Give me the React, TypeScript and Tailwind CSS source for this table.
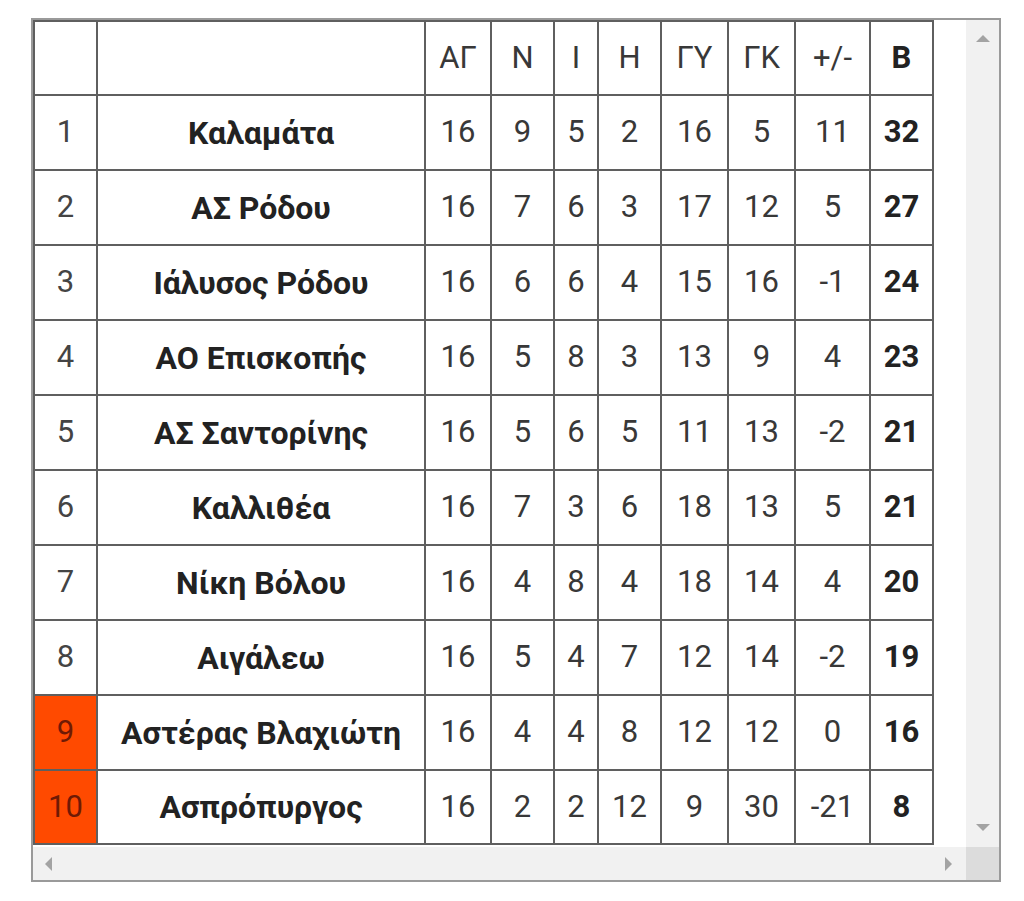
import React from 'react'

type Row = {
  pos: number
  team: string
  stats: number[]
  pts: number
  relegated?: boolean
}

const rows: Row[] = [
  { pos: 1, team: 'Καλαμάτα', stats: [16, 9, 5, 2, 16, 5, 11], pts: 32 },
  { pos: 2, team: 'ΑΣ Ρόδου', stats: [16, 7, 6, 3, 17, 12, 5], pts: 27 },
  { pos: 3, team: 'Ιάλυσος Ρόδου', stats: [16, 6, 6, 4, 15, 16, -1], pts: 24 },
  { pos: 4, team: 'ΑΟ Επισκοπής', stats: [16, 5, 8, 3, 13, 9, 4], pts: 23 },
  { pos: 5, team: 'ΑΣ Σαντορίνης', stats: [16, 5, 6, 5, 11, 13, -2], pts: 21 },
  { pos: 6, team: 'Καλλιθέα', stats: [16, 7, 3, 6, 18, 13, 5], pts: 21 },
  { pos: 7, team: 'Νίκη Βόλου', stats: [16, 4, 8, 4, 18, 14, 4], pts: 20 },
  { pos: 8, team: 'Αιγάλεω', stats: [16, 5, 4, 7, 12, 14, -2], pts: 19 },
  { pos: 9, team: 'Αστέρας Βλαχιώτη', stats: [16, 4, 4, 8, 12, 12, 0], pts: 16, relegated: true },
  { pos: 10, team: 'Ασπρόπυργος', stats: [16, 2, 2, 12, 9, 30, -21], pts: 8, relegated: true },
]

const headers = ['ΑΓ', 'Ν', 'Ι', 'Η', 'ΓΥ', 'ΓΚ', '+/-']
const statWidths = ['w-[66px]', 'w-[63px]', 'w-[44px]', 'w-[63px]', 'w-[67px]', 'w-[67px]', 'w-[75px]']

const cell = 'border-r-2 border-b-2 border-[#5f5f5f] text-center align-middle p-0'

function Arrow({ dir }: { dir: 'up' | 'down' | 'left' | 'right' }) {
  const pts = {
    up: '0,9 7,2 14,9',
    down: '0,2 7,9 14,2',
    left: '9,0 2,7 9,14',
    right: '2,0 9,7 2,14',
  }[dir]
  const size = dir === 'up' || dir === 'down' ? { w: 14, h: 11 } : { w: 11, h: 14 }
  return (
    <svg width={size.w} height={size.h} viewBox={`0 0 ${size.w} ${size.h}`}>
      <polygon points={pts} fill="#a3a3a3" />
    </svg>
  )
}

export default function App() {
  return (
    <div className="min-h-[901px] w-[1024px] bg-white pt-[18px] pl-[31px]" style={{ fontFamily: 'Roboto, "Noto Sans", sans-serif' }}>
      <div className="flex w-[970px] flex-col border-2 border-[#9a9a9a] bg-white">
        <div className="flex">
          <div className="flex-1 pb-[2px]">
            <table className="table-fixed border-separate border-spacing-0 text-[31px] text-[#383838]">
              <tbody>
                <tr className="h-[76px]">
                  <td className={`${cell} w-[65px] border-l-2 border-t-2`}></td>
                  <td className={`${cell} w-[328px] border-t-2`}></td>
                  {headers.map((h, i) => (
                    <td key={h} className={`${cell} ${statWidths[i]} border-t-2`}>{h}</td>
                  ))}
                  <td className={`${cell} w-[63px] border-t-2 font-bold text-[#222]`}>Β</td>
                </tr>
                {rows.map((r, idx) => (
                  <tr key={r.pos} className={idx === rows.length - 1 ? 'h-[74px]' : 'h-[75px]'}>
                    <td className={`${cell} border-l-2 ${r.relegated ? 'bg-[#ff4a00] text-[#6e1a05]' : 'text-[#444]'}`}>{r.pos}</td>
                    <td className={`${cell} text-[32px] font-bold text-[#222]`}>{r.team}</td>
                    {r.stats.map((s, i) => (
                      <td key={i} className={cell}>{s}</td>
                    ))}
                    <td className={`${cell} font-bold text-[#222]`}>{r.pts}</td>
                  </tr>
                ))}
              </tbody>
            </table>
          </div>
          <div className="flex w-[33px] flex-col items-center justify-between bg-[#f1f1f1] pt-[13px] pb-[14px]">
            <Arrow dir="up" />
            <Arrow dir="down" />
          </div>
        </div>
        <div className="flex h-[33px]">
          <div className="flex flex-1 items-center justify-between bg-[#f1f1f1] pl-[10px] pr-[12px]">
            <Arrow dir="left" />
            <Arrow dir="right" />
          </div>
          <div className="w-[33px] bg-[#dcdcdc]"></div>
        </div>
      </div>
    </div>
  )
}
